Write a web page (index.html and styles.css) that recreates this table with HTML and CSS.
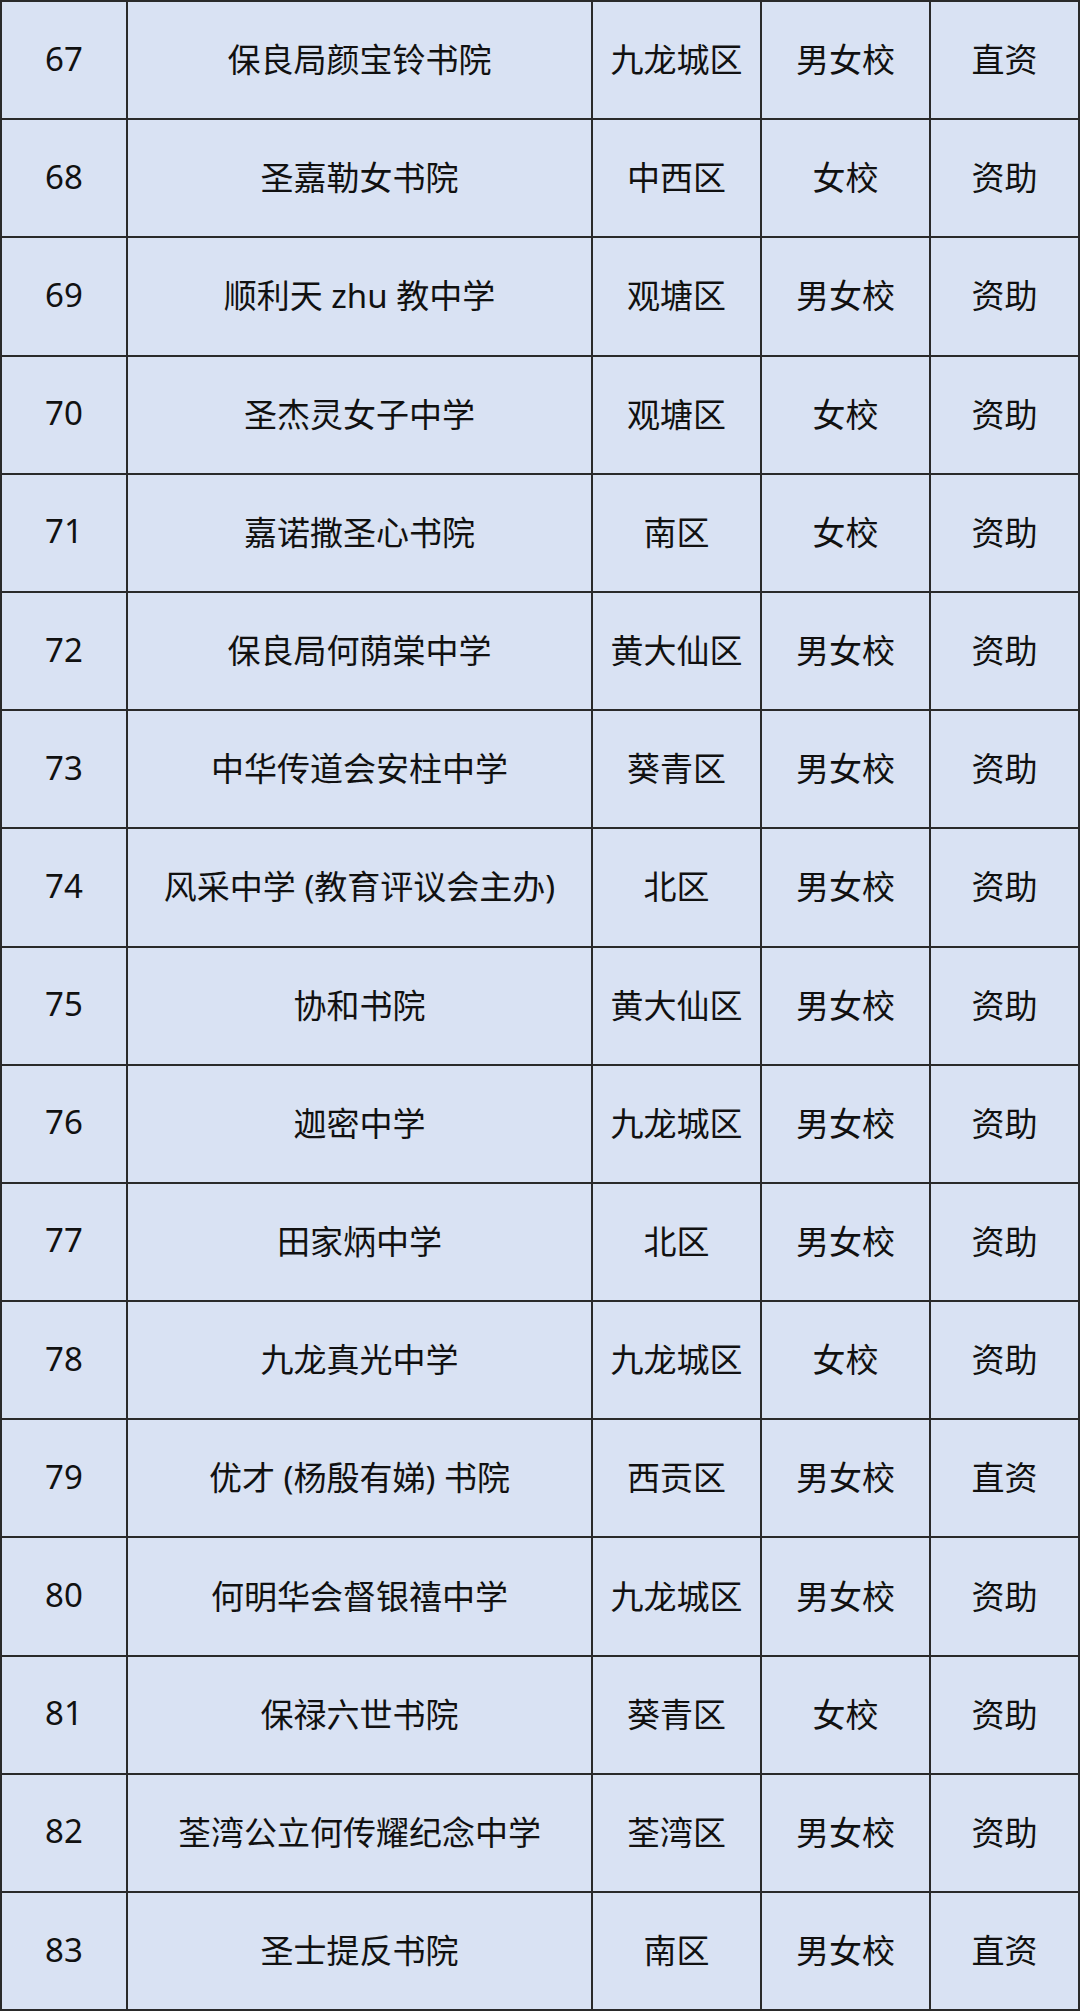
FILE: index.html
```html
<!DOCTYPE html>
<html lang="zh-CN">
<head>
<meta charset="utf-8">
<title>学校列表</title>
<link rel="stylesheet" href="styles.css">
</head>
<body>
<div class="table">
  <div class="cell">67</div><div class="cell">保良局颜宝铃书院</div><div class="cell">九龙城区</div><div class="cell">男女校</div><div class="cell">直资</div>
  <div class="cell">68</div><div class="cell">圣嘉勒女书院</div><div class="cell">中西区</div><div class="cell">女校</div><div class="cell">资助</div>
  <div class="cell">69</div><div class="cell">顺利天 zhu 教中学</div><div class="cell">观塘区</div><div class="cell">男女校</div><div class="cell">资助</div>
  <div class="cell">70</div><div class="cell">圣杰灵女子中学</div><div class="cell">观塘区</div><div class="cell">女校</div><div class="cell">资助</div>
  <div class="cell">71</div><div class="cell">嘉诺撒圣心书院</div><div class="cell">南区</div><div class="cell">女校</div><div class="cell">资助</div>
  <div class="cell">72</div><div class="cell">保良局何荫棠中学</div><div class="cell">黄大仙区</div><div class="cell">男女校</div><div class="cell">资助</div>
  <div class="cell">73</div><div class="cell">中华传道会安柱中学</div><div class="cell">葵青区</div><div class="cell">男女校</div><div class="cell">资助</div>
  <div class="cell">74</div><div class="cell">风采中学 (教育评议会主办)</div><div class="cell">北区</div><div class="cell">男女校</div><div class="cell">资助</div>
  <div class="cell">75</div><div class="cell">协和书院</div><div class="cell">黄大仙区</div><div class="cell">男女校</div><div class="cell">资助</div>
  <div class="cell">76</div><div class="cell">迦密中学</div><div class="cell">九龙城区</div><div class="cell">男女校</div><div class="cell">资助</div>
  <div class="cell">77</div><div class="cell">田家炳中学</div><div class="cell">北区</div><div class="cell">男女校</div><div class="cell">资助</div>
  <div class="cell">78</div><div class="cell">九龙真光中学</div><div class="cell">九龙城区</div><div class="cell">女校</div><div class="cell">资助</div>
  <div class="cell">79</div><div class="cell">优才 (杨殷有娣) 书院</div><div class="cell">西贡区</div><div class="cell">男女校</div><div class="cell">直资</div>
  <div class="cell">80</div><div class="cell">何明华会督银禧中学</div><div class="cell">九龙城区</div><div class="cell">男女校</div><div class="cell">资助</div>
  <div class="cell">81</div><div class="cell">保禄六世书院</div><div class="cell">葵青区</div><div class="cell">女校</div><div class="cell">资助</div>
  <div class="cell">82</div><div class="cell">荃湾公立何传耀纪念中学</div><div class="cell">荃湾区</div><div class="cell">男女校</div><div class="cell">资助</div>
  <div class="cell">83</div><div class="cell">圣士提反书院</div><div class="cell">南区</div><div class="cell">男女校</div><div class="cell">直资</div>
</div>
</body>
</html>
```

FILE: styles.css
```css
html, body {
  margin: 0;
  padding: 0;
  background: #ffffff;
}

.table {
  display: grid;
  grid-template-columns: 126px 465px 169px 169px 149px;
  grid-auto-rows: 118.2px;
  width: 1080px;
  box-sizing: border-box;
  border-top: 2px solid #2a2a2a;
  border-left: 2px solid #2a2a2a;
  background: #d9e2f3;
  font-family: "Noto Sans", "Noto Sans CJK SC", sans-serif;
  font-size: 33px;
  color: #111111;
}

.cell {
  display: flex;
  align-items: center;
  justify-content: center;
  box-sizing: border-box;
  border-right: 2px solid #2a2a2a;
  border-bottom: 2px solid #2a2a2a;
  white-space: nowrap;
  padding-bottom: 4px;
}
```
